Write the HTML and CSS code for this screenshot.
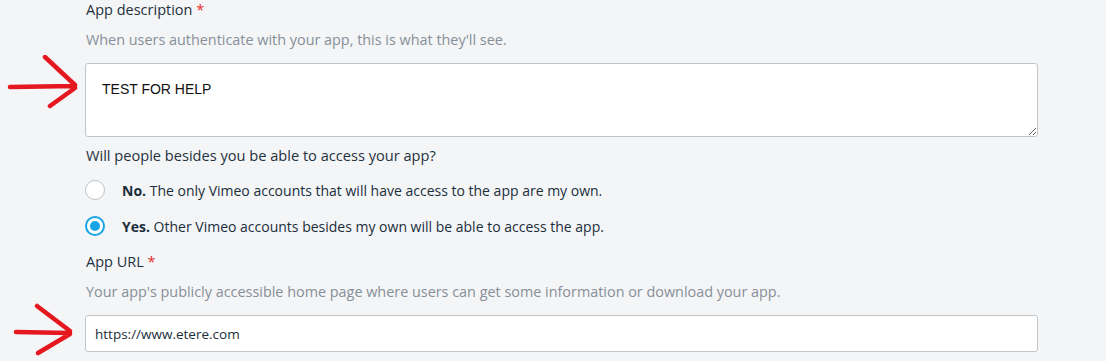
FILE: index.html
```html
<!DOCTYPE html>
<html>
<head>
<meta charset="utf-8">
<link rel="stylesheet" href="styles.css">
</head>
<body>
<div class="form">
  <div class="field">
    <div class="label">App description <span class="req">*</span></div>
    <div class="help">When users authenticate with your app, this is what they'll see.</div>
    <textarea class="textarea">TEST FOR HELP</textarea>
  </div>
  <div class="question">Will people besides you be able to access your app?</div>
  <div class="radios">
    <label class="radio"><span class="circle"></span><span class="rtext"><b>No.</b> The only Vimeo accounts that will have access to the app are my own.</span></label>
    <label class="radio"><span class="circle checked"></span><span class="rtext"><b>Yes.</b> Other Vimeo accounts besides my own will be able to access the app.</span></label>
  </div>
  <div class="field">
    <div class="label">App URL <span class="req">*</span></div>
    <div class="help">Your app's publicly accessible home page where users can get some information or download your app.</div>
    <input class="input" type="text" value="https://www.etere.com">
  </div>
</div>
<svg class="arrow arrow1" width="90" height="60" viewBox="0 0 90 60">
  <path d="M10 32 L75 31 M45 2 L75 30 M75 33 L50 51" fill="none" stroke="#e5171f" stroke-width="4.5" stroke-linecap="round" stroke-linejoin="round"/>
</svg>
<svg class="arrow arrow2" width="90" height="60" viewBox="0 0 90 60">
  <path d="M16 32 L70 33 M37 6 L70 31 M70 34 L38 53" fill="none" stroke="#e5171f" stroke-width="4.5" stroke-linecap="round" stroke-linejoin="round"/>
</svg>
</body>
</html>
```
FILE: styles.css
```css
html, body {
  margin: 0;
  padding: 0;
  background: #f4f5f7;
}
body {
  position: relative;
  width: 1106px;
  height: 361px;
  overflow: hidden;
  font-family: "Open Sans", Lato, sans-serif;
  color: #1a2e3b;
}
.form {
  padding-left: 85px;
  width: 953px;
  display: flex;
  flex-direction: column;
}
.label {
  font-size: 14.5px;
  line-height: 20px;
  color: #1f3240;
  padding-left: 1px;
}
.req {
  color: #e32b2b;
}
.help {
  margin-top: 10px;
  font-size: 14.4px;
  line-height: 20px;
  color: #868f97;
  padding-left: 1px;
}
.textarea {
  display: block;
  box-sizing: border-box;
  margin-top: 13px;
  width: 953px;
  height: 74px;
  border: 1px solid #c2c5c8;
  border-radius: 3px;
  background: #fff;
  padding: 16px 16px;
  font-family: "Liberation Sans", Arial, sans-serif;
  font-size: 14px;
  line-height: 18px;
  color: #111;
  resize: vertical;
}
.question {
  margin-top: 8px;
  font-size: 14.6px;
  line-height: 20px;
  color: #1f3240;
  padding-left: 1px;
}
.radios {
  margin-top: 15px;
  display: flex;
  flex-direction: column;
  gap: 16px;
}
.radio {
  display: flex;
  align-items: center;
  gap: 17px;
  height: 20px;
  font-size: 14px;
  color: #1a2e3b;
}
.circle {
  box-sizing: border-box;
  width: 20px;
  height: 20px;
  border-radius: 50%;
  border: 1px solid #bfc3c6;
  background: #fff;
  flex: none;
  position: relative;
}
.circle.checked {
  border: 2px solid #17a5e6;
}
.circle.checked::after {
  content: "";
  position: absolute;
  left: 3px;
  top: 3px;
  width: 10px;
  height: 10px;
  border-radius: 50%;
  background: #17a5e6;
}
.rtext b {
  font-weight: 700;
}
.radios + .field {
  margin-top: 16px;
}
.input {
  display: block;
  box-sizing: border-box;
  margin-top: 13px;
  width: 953px;
  height: 37px;
  border: 1px solid #c2c5c8;
  border-radius: 3px;
  background: #fff;
  padding: 0 9px;
  font-family: "Open Sans", Lato, sans-serif;
  font-size: 13.5px;
  color: #1a2e3b;
}
.arrow {
  position: absolute;
  left: 0;
}
.arrow1 {
  top: 55px;
}
.arrow2 {
  top: 300px;
}
```
